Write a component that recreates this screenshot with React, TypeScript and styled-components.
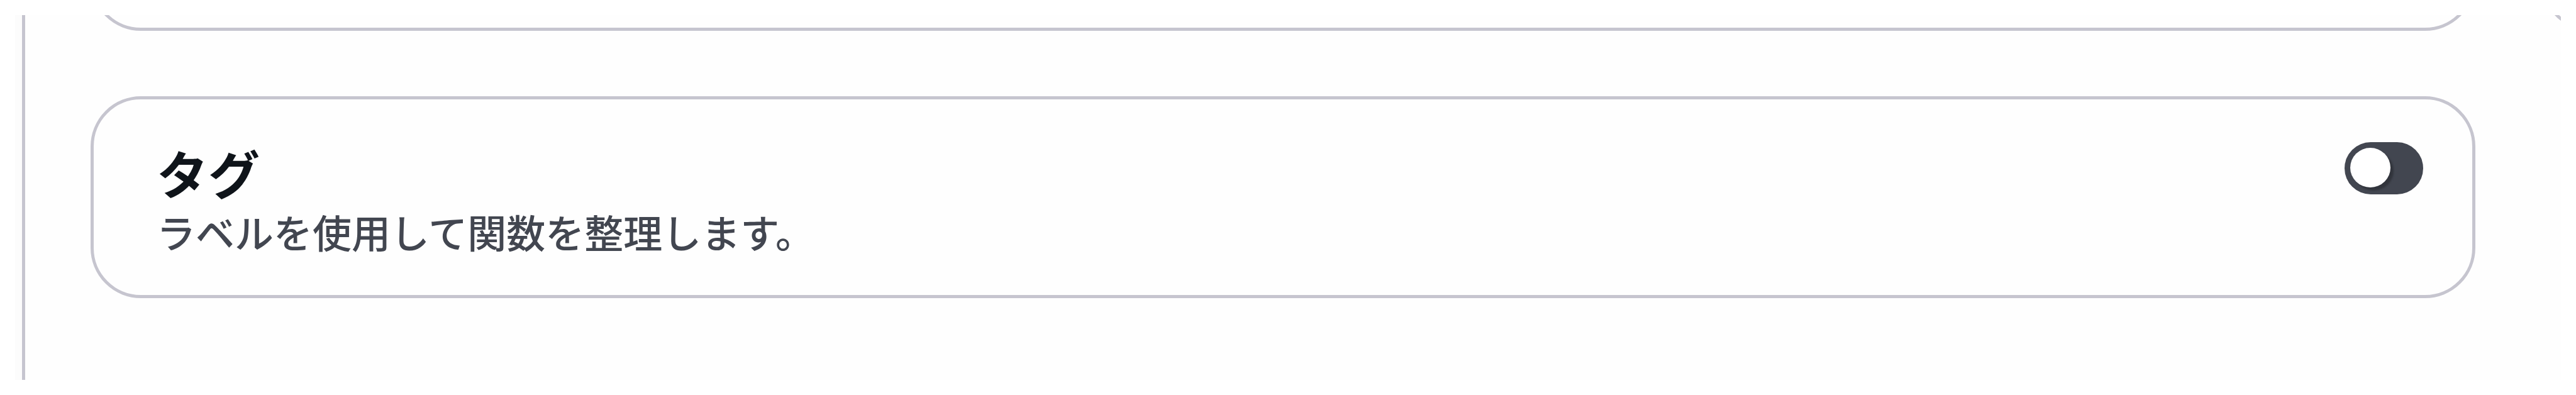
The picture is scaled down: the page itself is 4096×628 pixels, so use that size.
import { useState } from "react"
import styled, { createGlobalStyle } from "styled-components"

const GlobalStyle = createGlobalStyle`
    *, *::before{
        box-sizing: border-box;
    }

    body{
        margin: 0;
        background: #ffffff;
        font-family: "Noto Sans CJK JP", sans-serif;
    }
`

const Page = styled.div`
    display: flex;
    height: 100vh;
    padding: 24px;
`

const Rail = styled.div`
    flex: none;
    width: 16px;
    background: #fcfcfc;
    border-right: 5px solid #c6c5cf;
`

const Panel = styled.main`
    display: grid;
    flex: 1;
    min-width: 0;
    grid-template-columns: minmax(0, 1fr) 32px;
    grid-auto-rows: max-content;
    gap: 104px;
    align-content: end;
    padding: 0 0 130px 104px;
    overflow: hidden;
    background: #fefefe;
`

const Card = styled.section`
    display: flex;
    justify-content: space-between;
    align-items: flex-start;
    min-width: 320px;
    min-height: 240px;
    padding: 68px 78px 55px 100px;
    border: 5px solid #c6c5cf;
    border-radius: 80px;
`

const Texts = styled.div`
    display: flex;
    flex-direction: column;

    .title{
        font-size: 82px;
        font-weight: 700;
        line-height: 96px;
        color: #0f141a;
    }

    .description{
        margin: 0;
        font-size: 62px;
        font-weight: 500;
        line-height: 92px;
        color: #424650;
    }
`

const Toggle = styled.input`
    appearance: none;
    flex: none;
    width: 125px;
    height: 83px;
    margin: 0;
    padding: 9px;
    border-radius: 42px;
    background: ${({ checked }) => (checked ? "#006ce0" : "#424650")};
    cursor: pointer;

    &::before{
        content: "";
        display: block;
        width: 64px;
        height: 63px;
        margin-left: ${({ checked }) => (checked ? "43px" : "0")};
        border-radius: 50%;
        background: #ffffff;
        box-shadow: 5px 5px 3px rgba(0, 0, 0, 0.25);
    }
`

const App = () => {
  const [enabled, setEnabled] = useState(false)

  return (
    <>
        <GlobalStyle />
        <Page lang="ja">
            <Rail />
            <Panel>
                <Card />
                <Card />
                <Card>
                    <Texts>
                        <label className="title" htmlFor="tags">タグ</label>
                        <p className="description" id="tags-description">
                            ラベルを使用して関数を整理します。
                        </p>
                    </Texts>
                    <Toggle
                        type="checkbox"
                        role="switch"
                        id="tags"
                        aria-describedby="tags-description"
                        checked={enabled}
                        onChange={(e) => setEnabled(e.target.checked)}
                    />
                </Card>
            </Panel>
        </Page>
    </>
  )
}

export default App
